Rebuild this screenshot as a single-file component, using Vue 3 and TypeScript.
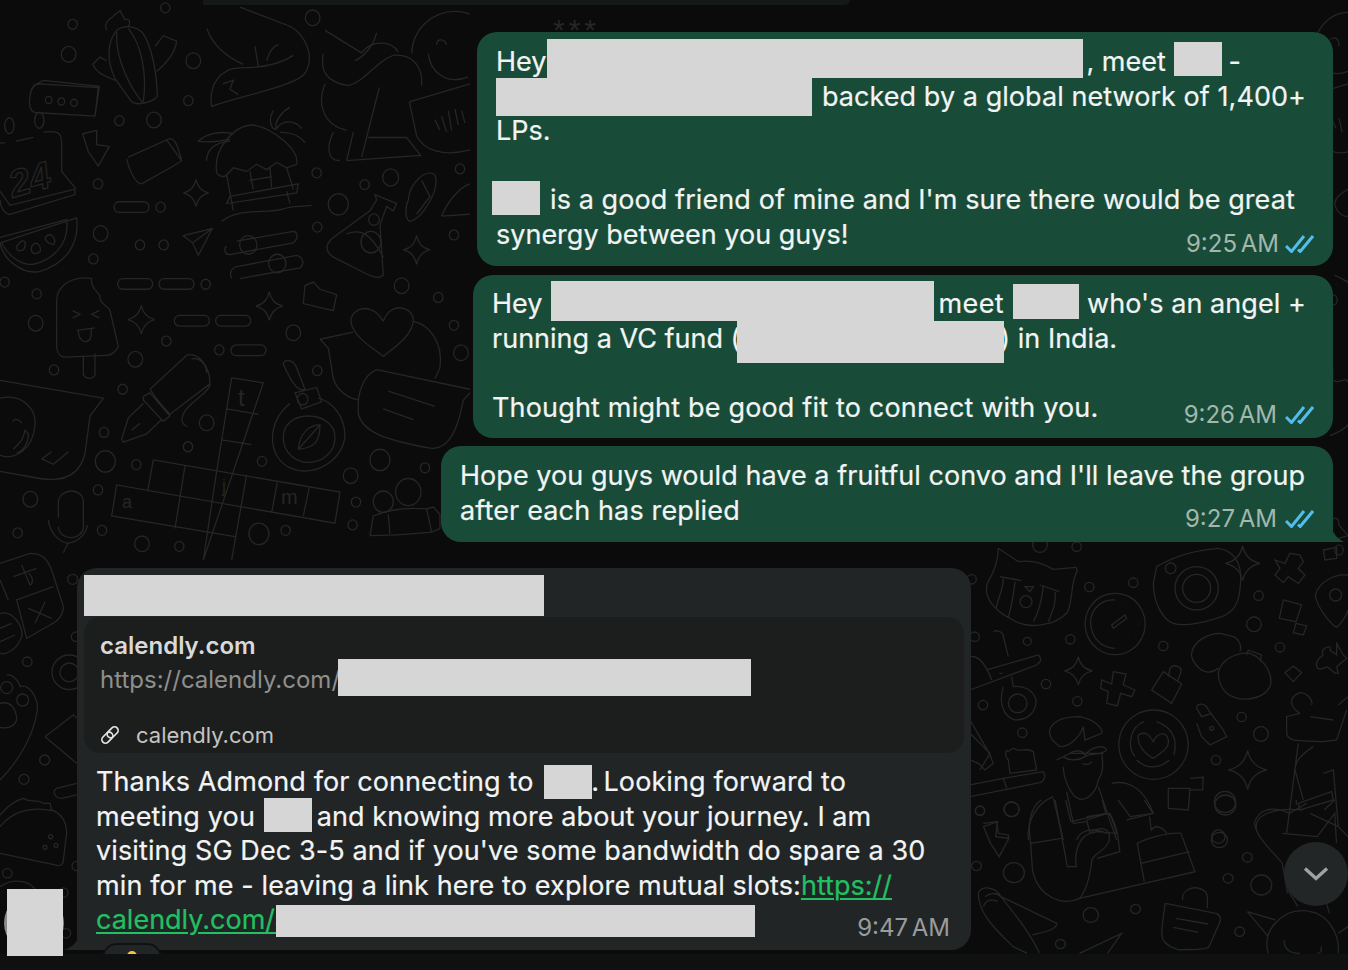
<script setup lang="ts">
type Seg = { t?: string; sp?: number; ws?: number; w?: number; dx?: number; top?: number; h?: number; rw?: number; cls?: string };
type Line = Seg[];
interface Msg { id: string; out: boolean; time: string; lines: Line[] }

const r = (w: number, dx: number, top: number, h: number, rw?: number): Seg => ({ w, dx, top, h, rw: rw ?? w });

const first: Msg = {
  id: 'b1', out: true, time: '9:25 AM',
  lines: [
    [{ t: 'Hey' }, r(540, 1, -32, 39, 536), { t: ', meet' }, r(55, 8, -29, 34, 48), { t: ' -' }],
    [r(326, 0, -28, 38, 316), { t: 'backed by a global network of 1,400+', sp: 0.055 }],
    [{ t: 'LPs.' }],
    [{ t: ' ' }],
    [r(54, -4, -28, 34, 48), { t: 'is a good friend of mine and I\'m sure there would be great', sp: 0.09 }],
    [{ t: 'synergy between you guys!' }],
  ],
};
const second: Msg = {
  id: 'b2', out: true, time: '9:26 AM',
  lines: [
    [{ t: 'Hey' }, r(396, 9, -32, 40, 383), { t: 'meet', sp: 0.4 }, r(83, 9, -29, 35, 66), { t: 'who\'s an angel +', sp: 0.06 }],
    [{ t: 'running a VC fund (' }, r(260, -3, -27, 42, 267), { t: ') in India.' }],
    [{ t: ' ' }],
    [{ t: 'Thought might be good fit to connect with you.', sp: 0.17 }],
  ],
};
const third: Msg = {
  id: 'b3', out: true, time: '9:27 AM',
  lines: [
    [{ t: 'Hope you guys would have a fruitful convo and I\'ll leave the group', sp: 0.045 }],
    [{ t: 'after each has replied', sp: 0.14 }],
  ],
};
const outgoing = [first, second, third];

const bodyLines: Line[] = [
  [{ t: 'Thanks Admond for connecting to ', sp: 0.1 }, r(50, 3, -26, 34, 48), { t: '. ', ws: -3 }, { t: 'Looking forward to', sp: 0.1 }],
  [{ t: 'meeting you ', sp: 0.15 }, r(54, 1, -28, 34, 48), { t: 'and knowing more about your journey. I am', sp: 0.07 }],
  [{ t: 'visiting SG Dec 3-5 and if you\'ve some bandwidth do spare a 30', sp: 0.11 }],
  [{ t: 'min for me - leaving a link here to explore mutual slots:', sp: 0.125 }, { t: 'https://', cls: 'link' }],
  [{ t: 'calendly.com/a', cls: 'link' }, r(479, -14, -24, 32)],
];

const rstyle = (s: Seg) => ({ width: `${s.w}px` });
const istyle = (s: Seg) => ({
  left: `${s.dx}px`, top: `${s.top}px`, height: `${s.h}px`, width: `${s.rw}px`,
});
const tstyle = (s: Seg) => ({
  letterSpacing: s.sp ? `${s.sp}px` : undefined,
  wordSpacing: s.ws ? `${s.ws}px` : undefined,
});

/* ---- wallpaper doodles ---- */
const star = (x: number, y: number, s: number) => {
  const k = s * 0.18;
  return `M${x} ${y - s}Q${x + k} ${y - k} ${x + s} ${y}Q${x + k} ${y + k} ${x} ${y + s}Q${x - k} ${y + k} ${x - s} ${y}Q${x - k} ${y - k} ${x} ${y - s}Z`;
};
const pill = (x: number, y: number, w: number, h: number) => {
  const q = h / 2;
  return `M${x + q} ${y}H${x + w - q}A${q} ${q} 0 0 1 ${x + w - q} ${y + h}H${x + q}A${q} ${q} 0 0 1 ${x + q} ${y}Z`;
};
type Group = { id: string; tf: string; c: number[][]; p: string[] };
const groups: Group[] = [
  {
    id: 'a', tf: 'scale(0.3333,0.3571)',
    c: [[206,152,22],[218,68,14],[496,22,14],[580,170,22],[565,282,14],[358,338,14],[462,336,22],[938,50,22],[294,515,14],[482,580,14],[1172,497,24],[1094,517,14],[1015,572,30],[950,484,14],[952,636,14],[1380,473,14],[1362,658,14],[302,654,22],[420,686,14],[491,686,14],[280,725,14],[14,790,14],[110,823,14],[617,796,14],[1205,800,22],[1315,833,14],[107,905,22],[499,955,14],[880,932,22],[658,980,14],[1362,911,14],[1383,988,22],[406,1006,22],[162,1036,14],[952,1038,14],[368,1090,14],[620,1184,22],[312,1211,14],[564,1251,14],[786,1292,14],[316,1292,30],[409,1301,14],[1140,1288,30],[1275,1310,14],[1052,1332,22],[294,1372,14],[91,1398,22],[1068,1406,14],[1058,1470,14],[306,1485,14],[777,1495,30],[857,1485,14],[53,1492,14],[426,1523,22],[538,1530,14],[146,280,10],[184,284,10],[222,288,10],[745,686,26],[832,738,26],[1122,615,16],[1113,678,30],[908,1118,16],[1225,1378,38],[1150,1405,30]],
    p: [
      pill(342,565,105,30), pill(353,780,105,30), pill(477,780,105,30), pill(523,883,105,30), pill(647,883,105,30), pill(693,966,105,30),
      star(588,540,38), star(1250,700,40), star(424,895,40), star(808,857,40),
      'M350 85C320 120 320 170 345 220L395 285C410 298 460 285 472 270C470 200 455 130 430 95C410 70 370 70 350 85M350 90C345 170 395 250 430 290M385 80C430 130 440 220 430 285',
      'M320 85C310 60 330 55 340 45L360 30L375 55C390 50 392 65 385 75M345 225C310 210 290 205 278 180L300 160L320 170M470 200C500 175 525 150 530 115L490 100L465 130',
      'M90 270C92 250 100 235 120 235L295 245L285 325L105 315C90 312 85 290 90 270M100 240L130 225L298 242L285 325',
      'M720 20L860 70C920 90 950 170 910 210C880 240 720 270 635 298C625 240 660 190 720 190C780 190 840 180 880 155M620 80C640 130 680 160 730 180M765 130L775 185M800 170C810 140 820 130 835 125M668 235L700 225L690 250L715 265',
      'M975 85L1085 148M1130 92C1120 130 1090 160 1065 170M1085 148C1110 115 1170 110 1195 145M970 150C960 200 980 230 1045 240C1100 225 1130 170 1180 155C1240 150 1270 190 1265 240M975 235C950 290 970 350 1040 365M1138 245L1085 440M1040 450L1262 435L1220 385L1105 385M1060 370L1040 450M1000 370C980 410 980 450 1020 450',
      'M1235 150C1240 70 1310 30 1370 32C1400 35 1410 40 1410 40M1285 150C1290 200 1340 240 1405 215M1310 125C1310 110 1330 105 1340 125',
      'M1228 285L1410 235M1228 285L1250 380C1270 420 1330 440 1410 420M1305 335L1320 365M1325 325L1340 370M1345 310L1355 365M1365 305L1375 350M1385 310L1395 345',
      'M0 400H15M48 395L100 385M130 370C170 365 185 370 185 400V480L225 525V545L30 600C15 600 0 580 0 560M0 535L30 575L222 530M20 370A14 22 0 1 1 21 371M110 355A14 22 0 1 1 111 356',
      'M385 440L500 392L545 450L520 465L425 515C405 515 385 470 380 445M500 392C520 380 530 395 545 450',
      'M248 375L290 365L290 405L328 410L295 465L265 425Z',
      'M650 480C640 420 700 350 760 350C820 360 900 420 890 460L860 470L830 455L800 475L770 460L740 480L700 470L680 490C670 500 650 490 650 480M680 490L700 590M750 480L760 530M810 470L815 525M748 505L815 495M690 550L895 515L890 540L680 570ZM860 470L880 530M860 535L870 570M665 620C720 580 800 600 850 585C880 575 900 580 935 575M820 310C800 340 820 370 830 360C820 340 850 310 870 300M830 360C850 330 890 340 905 360M840 370C870 370 900 380 915 400M700 375C660 365 620 375 595 395C620 400 660 395 690 390M620 450C620 420 640 400 690 395',
      'M0 680L230 610C240 690 190 740 120 760C70 770 10 730 0 680M0 665L200 615C210 690 150 730 100 740C60 745 20 710 5 680M50 690C70 660 85 680 70 700C50 705 50 700 50 690M95 690C110 670 125 690 120 705C105 715 90 710 95 690M140 660C160 650 170 675 160 685C140 680 130 670 140 660',
      'M1125 545L1190 570L1180 590L1160 578L1140 630L1150 770C1130 790 1100 765 1000 720C970 700 980 680 1000 665L1110 590L1130 560ZM1040 655C1080 640 1110 650 1150 720',
      'M1225 560C1230 510 1280 470 1305 490C1320 530 1270 610 1230 620C1215 615 1215 580 1225 560M1265 505L1290 550L1250 600',
      'M1325 605C1350 550 1390 520 1410 515M1325 605L1410 600',
      'M550 660L637 640L595 715L578 680ZM578 680L637 640',
      'M680 690C670 695 675 715 690 713L880 680C895 670 895 650 880 648L710 675M695 780C685 760 700 745 720 745L890 715C910 720 915 740 900 750L720 780',
      'M190 800C210 780 250 775 275 780C270 810 300 820 300 830C295 850 330 860 330 870L355 970C350 985 330 995 320 995L190 1000C175 995 170 980 170 970V840C170 820 180 810 190 800M250 1000V1050C260 1065 280 1060 285 1050V990M218 870L240 880L218 890M298 870L275 880L298 890M230 925L285 918M235 925C235 960 265 965 272 945L275 920',
      'M915 800L940 790L960 810L1010 825L1000 870L910 850Z',
      'M1150 900C1110 835 1040 870 1055 910C1070 950 1120 975 1150 998C1180 975 1240 940 1240 895C1235 855 1170 845 1150 900M960 950L1060 930M960 950L985 975L1000 1060C1010 1090 1040 1115 1075 1120M1240 900C1290 910 1330 960 1320 1030L1305 1060',
      'M1130 1035L1410 1090M1130 1035C1090 1050 1070 1100 1075 1160C1090 1210 1150 1230 1290 1255C1340 1260 1370 1220 1390 1120C1400 1110 1405 1105 1410 1100M1165 1095L1305 1138M1150 1145L1240 1175',
      'M450 1090L560 995C590 985 630 1020 630 1075L510 1160C490 1140 470 1120 450 1090M575 1005C600 1000 620 1020 620 1045M430 1110L450 1100L510 1165L490 1180L430 1120ZM430 1130L385 1170L365 1230L370 1238L440 1215L485 1175M420 1185L395 1205M630 1075C630 1100 560 1130 550 1160C540 1180 550 1190 562 1195',
      'M695 1058L790 1072L610 1568M695 1058L650 1320M680 1145L775 1160M665 1232L755 1245M460 1288L1020 1378L1005 1465L350 1358L335 1445L705 1503M460 1288L443 1375M555 1305L525 1480M832 1352L815 1435M928 1365L910 1445M650 1320L610 1568M740 1330L695 1568',
      'M850 1020C850 1005 880 1005 890 1030L915 1090C890 1100 870 1060 850 1020M870 1130C800 1180 800 1280 870 1310C940 1340 1030 1290 1035 1220C1035 1170 1000 1125 955 1115M885 1100L950 1085L965 1125L905 1145Z',
      'M925 1165C880 1165 850 1190 850 1225C850 1270 890 1295 925 1295C970 1295 1005 1265 1005 1225C1005 1190 970 1165 925 1165M895 1258C900 1210 930 1190 960 1190C960 1240 940 1255 895 1258M895 1258L960 1190',
      'M0 1065L310 1115L270 1165L255 1270C240 1330 190 1350 120 1340L0 1320M125 1285L160 1300L205 1265M155 1265L125 1285',
      'M0 1115C70 1100 110 1150 105 1190C100 1260 40 1290 0 1275M38 1180C45 1170 60 1175 65 1185M40 1258C70 1230 70 1225 75 1205L85 1215C85 1240 70 1265 50 1268',
      'M175 1450V1405C180 1365 250 1365 250 1405V1480C240 1515 180 1515 175 1475M145 1455C150 1500 190 1525 210 1520C240 1515 260 1490 262 1470M205 1520L190 1548',
      'M1110 1500L1120 1445C1170 1425 1220 1420 1280 1425L1295 1490C1240 1495 1170 1500 1110 1500M1165 1440L1170 1495M1280 1425L1300 1420L1320 1440V1480L1295 1490',
    ],
  },
  {
    id: 'b', tf: 'translate(970,540) scale(0.3333)',
    c: [[210,15,22],[320,20,14],[5,118,14],[358,141,14],[490,128,14],[602,85,16],[866,167,14],[852,253,22],[14,290,14],[172,304,12],[301,298,14],[580,318,14],[930,322,14],[228,432,14],[39,495,14],[322,484,14],[157,578,14],[815,531,14],[873,582,22],[738,660,14],[30,812,14],[125,808,22],[765,786,32],[745,890,20],[680,145,65],[680,145,42],[1097,165,18],[143,490,28],[168,185,18],[725,565,6]],
    p: [
      star(325,393,42), star(833,690,58), star(818,70,52),
      'M85 25L145 65C180 60 220 70 250 88L318 82L322 92C300 130 310 190 290 220C250 260 170 270 120 235C70 210 40 170 52 130C70 100 85 60 85 25M90 110L155 122M100 115C100 150 85 170 78 205M135 125C130 170 125 200 115 230M210 135L268 155M220 140C215 180 205 220 190 245M255 155C260 190 245 220 235 245M165 140H190L180 155Z',
      'M435 180C395 175 360 210 362 250C365 300 400 325 435 325M435 160A90 92 0 1 0 436 160M465 225L425 255L430 265L470 235ZM468 189h1M495 215h1M504 252h1M495 288h1M470 313h1',
      'M560 80C610 50 680 30 745 25C790 30 815 70 812 120C810 180 800 220 740 235C690 250 640 260 610 250C580 240 550 190 550 130Z',
      'M915 60L945 70L960 40L990 45L1000 65L985 85L1005 105L985 130L955 110L940 128L915 105L930 85Z',
      'M1060 30L1100 22L1100 55L1065 60Z',
      'M940 180L995 195L978 245L928 235ZM978 250L1010 258L1000 285L970 278Z',
      'M1134 105C1090 100 1045 130 1036 165C1040 200 1080 250 1100 262C1110 255 1134 220 1134 210',
      'M1060 345C1045 325 1090 310 1080 330L1100 345L1100 310L1120 345L1130 355L1100 380L1105 400C1085 405 1080 370 1060 385C1035 395 1030 365 1060 345',
      'M970 378L995 398L970 425L945 398Z',
      'M0 350C30 345 50 380 65 420M50 390L205 345C215 355 215 365 200 375L0 450M70 275C70 270 100 270 100 290L115 350M125 410L130 440M100 440C85 490 100 530 135 540C180 540 200 510 198 480C190 450 160 435 130 440M88 400h10',
      'M0 540L55 635L70 670L45 690L25 670L0 660',
      'M430 395L468 402L460 435L495 450L485 470L452 460L442 498L410 490L415 455L392 445L395 420L425 432Z',
      'M580 395L635 432L605 490L545 450ZM595 410L600 385C610 370 640 380 632 400L622 425',
      'M745 385C700 420 660 360 665 340C670 300 720 280 750 280L790 290C810 300 815 320 810 335M745 400C750 360 800 335 840 340C890 360 910 410 900 440C880 480 810 490 770 460C750 440 745 420 745 400M830 345L835 330L875 345L870 365',
      'M550 510A104 104 0 1 0 551 510M522 545C480 560 470 620 495 650M560 545C600 560 625 590 612 645M500 660C530 690 570 685 598 660M550 655C520 640 500 610 505 585C530 570 540 590 550 605C560 580 590 570 595 600C600 625 570 640 550 655',
      'M725 520L695 530L680 505C680 485 710 490 715 510L760 570L770 590L720 615L695 590L680 550',
      'M990 520C955 500 960 470 985 460C1005 450 1030 480 1025 495M990 520L950 530V580C955 610 1000 600 1060 605L1100 600L1130 510M1020 530L1090 540M1134 470L1105 495M985 610L950 880M1030 620C1000 640 975 660 975 690L1000 780M985 790L1085 755L1090 780L990 810ZM1060 700L1090 690L1105 860M1000 810C900 800 850 830 860 870M1020 820L1105 860L1134 890',
      'M270 620C210 580 240 530 330 530C380 540 400 570 395 580L345 600L340 560C330 590 300 620 270 620M300 640H400M260 660L300 640C310 630 340 630 345 645C360 625 400 610 410 630C400 645 360 640 345 650C330 660 300 665 280 650M280 680C280 710 300 770 330 778C360 780 380 750 385 720C400 700 400 670 395 640M338 670C345 675 360 675 365 665',
      'M290 755L310 850L350 845M385 740L440 900M425 730C470 720 520 740 550 820L470 840M250 770C200 790 170 840 175 900M250 775L280 900M350 830L420 820L440 880L380 875L365 880M320 900C330 870 370 860 410 880',
      'M595 745L660 745L655 810L595 805ZM660 715L700 712L698 750L660 750',
      'M0 735L100 715L220 695C230 710 220 725 210 728L0 770M100 715L110 745M110 630C115 640 125 625 130 625C150 640 170 620 190 635L200 690L120 700L115 660C105 650 105 640 110 630',
      'M40 850L80 845L85 880L115 885V900',
      'M0 580L60 640L30 690',
    ],
  },
  {
    id: 'c', tf: 'translate(800,800) scale(0.3495,0.3333)',
    c: [[515,32,13],[605,28,22],[505,198,14],[612,218,30],[1200,120,23],[1280,172,14],[1225,235,14],[1320,255,30],[832,345,22],[960,327,14],[745,432,14],[1258,395,14],[1217,15,30]],
    p: [
      'M525 80L565 65L560 110L598 115L570 170L545 130Z',
      'M690 0C660 20 650 70 660 130L665 210C680 290 750 320 800 295L1130 215L1090 100C1050 95 985 120 965 130L985 245M660 130L750 115L730 0M975 190L1115 155',
      'M820 60L880 40C900 50 910 100 915 155L850 175M820 60L830 100C800 110 785 150 790 200L765 200L750 115M830 100C860 75 890 85 885 120C880 150 840 160 835 180C830 230 820 270 800 295M760 0L775 65L875 40L865 0',
      'M910 0L945 50L1010 40L985 0M1000 50L1005 90C1020 70 1040 85 1050 100',
      'M510 280C520 255 560 260 575 290L735 370C735 390 700 395 665 405M510 280C510 340 560 390 610 440L650 460M575 290C620 350 660 400 685 460M530 290C540 280 560 275 575 290M525 320C530 300 550 295 565 305',
      'M1045 310L1190 340C1205 345 1205 360 1200 370L1170 440C1160 455 1090 445 1085 450L1060 440C1030 420 1030 410 1045 310M1075 355L1168 372M1068 382L1140 397M1095 300C1090 270 1130 250 1160 275C1170 290 1165 310 1165 325',
      'M1340 460C1320 390 1380 330 1440 332C1510 335 1545 400 1540 460M1385 420C1385 445 1400 460 1430 460M1490 440C1495 450 1490 460 1480 460M1280 335L1360 360M1280 335L1340 410M1395 270L1425 320M1500 290L1515 340M1540 400L1568 380',
      'M800 460L920 400L880 460',
      'M1300 70C1310 30 1350 15 1400 40L1450 10M1300 70C1310 120 1350 150 1380 190L1395 280M1380 100L1480 110L1530 40L1535 130M1420 15V0M1500 30L1530 0',
    ],
  },
  {
    id: 'd', tf: 'translate(0,540) scale(0.3333)',
    c: [[218,118,15],[228,290,14],[82,365,14],[208,397,28],[208,397,52],[20,443,18],[68,480,18],[134,660,15],[72,718,15],[152,890,6],[135,922,6],[168,916,6],[22,1000,14],[190,1058,14],[198,1180,14],[230,978,14]],
    p: [
      'M0 70L90 40C120 40 140 50 155 90L190 200C190 220 180 240 150 255L80 295L50 180L160 140M0 120L25 180M85 100C100 110 100 130 90 135M40 110L110 85M65 75L90 135M85 205L155 235M135 185L105 250',
      'M0 220C40 210 70 260 65 290C50 335 10 345 0 340M0 265L35 250M0 305L45 285',
      'M0 490C40 480 50 520 50 540C40 565 15 565 0 562M20 405C40 400 60 430 60 440C85 430 115 470 112 510C100 600 40 680 0 720',
      'M135 590L220 525L240 540M135 590L230 670',
      'M230 730L170 745C155 755 165 775 185 775L230 765',
      'M0 825C30 790 50 780 70 775C90 790 110 775 130 790L150 790L155 810C180 820 200 840 200 880L190 960C190 975 180 980 165 975L0 940M0 860C40 810 100 800 155 812',
      'M0 1040C30 1020 60 1020 85 1030C100 1040 110 1050 110 1060',
    ],
  },
  {
    id: 'e', tf: 'translate(1300,0) scale(0.3,0.3571)',
    c: [[110,840,14],[130,1540,14]],
    p: [
      'M50 110C70 60 120 30 170 35M100 110C120 100 130 110 130 130M70 190C100 210 130 210 160 200M100 250L160 235M110 340L120 360M130 330L140 370M100 420C120 430 140 430 160 425',
      'M115 570C120 550 140 540 160 530M115 570C120 590 140 610 160 605M115 770L160 790M100 1050C120 1090 150 1050 160 1070M100 1000C110 1020 115 1060 100 1080M100 1220C130 1210 150 1200 160 1190M100 1470C110 1440 130 1450 130 1470L160 1500L120 1510',
    ],
  },
];
const wallText = [
  { id: 't1', x: 238, y: 406, s: 24, t: 't', tf: '', cls: '' },
  { id: 't2', x: 122, y: 508, s: 18, t: 'a', tf: '', cls: '' },
  { id: 't3', x: 222, y: 492, s: 18, t: 'j', tf: '', cls: '' },
  { id: 't4', x: 281, y: 504, s: 20, t: 'm', tf: '', cls: '' },
  { id: 't5', x: 6, y: 192, s: 38, t: '24', tf: 'rotate(-16 30 170)', cls: 'outline' },
  { id: 't6', x: 553, y: 40, s: 30, t: '***', tf: '', cls: 'stars' },
];
</script>

<template>
  <div class="app">
    <main class="chat">
      <svg class="wall" width="1348" height="954" aria-hidden="true">
        <g v-for="g in groups" :key="g.id" :transform="g.tf">
          <circle v-for="(c, i) in g.c" :key="i" :cx="c[0]" :cy="c[1]" :r="c[2]" />
          <path v-for="(d, i) in g.p" :key="i" :d="d" />
        </g>
        <text v-for="w in wallText" :key="w.id" :x="w.x" :y="w.y" :font-size="w.s" :transform="w.tf || undefined" :class="w.cls">{{ w.t }}</text>
      </svg>

      <div class="top-edge"></div>

      <section class="thread">
        <article v-for="m in outgoing" :key="m.id" class="bubble out" :class="m.id">
          <div v-for="(ln, i) in m.lines" :key="i" class="line">
            <template v-for="(s, j) in ln" :key="j">
              <span v-if="s.t" :class="s.cls" :style="tstyle(s)">{{ s.t }}</span>
              <span v-else class="gap" :style="rstyle(s)"><i :style="istyle(s)"></i></span>
            </template>
          </div>
          <div class="meta">
            <span class="time">{{ m.time }}</span>
            <svg class="ticks" width="29" height="18" viewBox="0 0 29 18">
              <path d="M1 11l5.5 5.5L19 1M13 14.5l2.2 2L28 1" />
            </svg>
          </div>
          <svg v-if="m.id === 'b3'" class="tail-out" width="14" height="16" viewBox="0 0 14 16">
            <path d="M0 0V16H13C7 13 2 8 0 0Z" />
          </svg>
        </article>

        <article class="bubble in">
          <div class="sender"><i></i></div>
          <div class="preview">
            <div class="p-title">calendly.com</div>
            <div class="p-url">https://calendly.com/a<i></i></div>
            <div class="p-site">
              <svg width="20" height="20" viewBox="0 0 20 20">
                <g transform="translate(10 10) rotate(-45)">
                  <rect x="-10" y="-3.6" width="12.5" height="7.2" rx="3.6" />
                  <rect x="-2.5" y="-3.6" width="12.5" height="7.2" rx="3.6" />
                </g>
              </svg>
              <span>calendly.com</span>
            </div>
          </div>
          <div class="body">
            <div v-for="(ln, i) in bodyLines" :key="i" class="line">
              <template v-for="(s, j) in ln" :key="j">
                <span v-if="s.t" :class="s.cls" :style="tstyle(s)">{{ s.t }}</span>
                <span v-else class="gap" :style="rstyle(s)"><i :style="istyle(s)"></i></span>
              </template>
            </div>
          </div>
          <div class="meta in-meta"><span class="time">9:47 AM</span></div>
          <svg class="tail-in" width="16" height="14" viewBox="0 0 16 14">
            <path d="M16 0V14H0C8 12 13 8 16 0Z" />
          </svg>
          <div class="reaction"><b></b></div>
        </article>
      </section>

      <button class="down" type="button" aria-label="Scroll to bottom">
        <svg width="26" height="16" viewBox="0 0 26 16"><path d="M2 2.5l11 10 11-10" /></svg>
      </button>
    </main>
    <footer class="strip"></footer>
    <div class="avatar"><i></i></div>
  </div>
</template>

<style scoped>
.app {
  position: relative;
  width: 1348px;
  height: 970px;
  display: flex;
  flex-direction: column;
  background: #0b0b0b;
  overflow: hidden;
  font-family: Inter, "Noto Sans", sans-serif;
  color: #f2f4f4;
}
.chat {
  position: relative;
  flex: none;
  height: 954px;
  overflow: hidden;
  background: #0b0b0b;
}
.wall {
  position: absolute;
  inset: 0;
}
.wall circle,
.wall path {
  fill: none;
  stroke: #252626;
  stroke-width: 1.3;
  vector-effect: non-scaling-stroke;
}
.wall text {
  fill: #252626;
  font-family: "Liberation Sans", sans-serif;
}
.wall text.outline {
  fill: none;
  stroke: #252626;
  stroke-width: 1.2;
  font-style: italic;
  font-weight: 700;
}
.wall text.stars {
  letter-spacing: 4px;
}
.top-edge {
  position: relative;
  width: 647px;
  height: 5px;
  margin-left: 203px;
  background: #151818;
  border-bottom-right-radius: 5px;
}
.thread {
  position: relative;
  display: flex;
  flex-direction: column;
  align-items: flex-end;
  padding: 27px 15px 0 0;
}
.bubble {
  position: relative;
  border-radius: 20px;
  font-size: 27px;
  white-space: pre;
  -webkit-text-stroke: 0.2px currentColor;
}
.line {
  height: 34.5px;
  line-height: 34.5px;
}
.out {
  background: #184c38;
  box-sizing: border-box;
}
.b1 {
  width: 856px;
  height: 234px;
  margin-bottom: 9px;
  padding: 13px 0 0 19px;
}
.b2 {
  width: 860px;
  height: 163px;
  margin-bottom: 8px;
  padding: 12px 0 0 19px;
}
.b3 {
  width: 892px;
  height: 96px;
  margin-bottom: 26px;
  padding: 13px 0 0 19px;
  border-bottom-right-radius: 0;
}
.gap {
  position: relative;
  display: inline-block;
  height: 0;
}
.gap i,
.sender i,
.p-url i,
.avatar i {
  display: block;
  position: absolute;
  background: #d6d6d6;
}
.meta {
  position: absolute;
  right: 19px;
  bottom: 10px;
  display: flex;
  align-items: center;
  gap: 7px;
  -webkit-text-stroke: 0;
}
.b1 .meta {
  bottom: 9px;
  gap: 6px;
}
.b2 .time,
.b3 .time {
  margin-right: 1px;
}
.time {
  font-size: 24px;
  line-height: 26px;
  color: #a2b7ad;
  word-spacing: -3px;
}
.ticks path {
  fill: none;
  stroke: #53bdeb;
  stroke-width: 3;
}
.tail-out {
  position: absolute;
  right: -12px;
  bottom: 0;
  color: #184c38;
}
.tail-out path,
.tail-in path {
  fill: currentColor;
}
.in {
  align-self: flex-start;
  width: 894px;
  height: 382px;
  margin-left: 77px;
  box-sizing: border-box;
  padding: 0 7px;
  background: #212526;
  border-bottom-left-radius: 0;
}
.tail-in {
  position: absolute;
  left: -14px;
  bottom: 0;
  color: #212526;
}
.sender {
  height: 49px;
}
.sender i {
  left: 7px;
  top: 7px;
  width: 460px;
  height: 41px;
}
.preview {
  height: 136px;
  box-sizing: border-box;
  padding: 12px 16px 0;
  background: #1c1e1e;
  border-radius: 16px;
  -webkit-text-stroke: 0;
}
.p-title {
  font-size: 24px;
  line-height: 34px;
  font-weight: 600;
  color: #d9d9d9;
}
.p-url {
  position: relative;
  font-size: 24px;
  line-height: 34px;
  color: #8f8f8f;
}
.p-url i {
  left: 238px;
  top: -4px;
  width: 413px;
  height: 37px;
}
.p-site {
  display: flex;
  align-items: center;
  gap: 16px;
  margin-top: 23px;
  font-size: 22px;
  line-height: 30px;
  color: #c4c4c4;
}
.p-site svg {
  flex: none;
}
.p-site rect {
  fill: none;
  stroke: #e4e4e4;
  stroke-width: 1.7;
}
.body {
  padding: 12px 0 0 12px;
}
.link {
  color: #21c063;
  text-decoration: underline;
  text-decoration-thickness: 2px;
  text-underline-offset: 3px;
}
.in-meta {
  right: 21px;
  bottom: 9px;
}
.in-meta .time {
  color: #9a9c9c;
}
.reaction {
  position: absolute;
  left: 25px;
  top: 375px;
  width: 60px;
  height: 30px;
  box-sizing: border-box;
  border: 2px solid #101212;
  border-radius: 20px;
  background: #212526;
}
.reaction b {
  display: block;
  width: 10px;
  height: 10px;
  margin: 6px auto 0;
  border-radius: 50%;
  background: #f5c33b;
}
.avatar {
  position: absolute;
  left: 4px;
  top: 893px;
  width: 60px;
  height: 60px;
  border-radius: 50%;
  background: #8a8a8a;
}
.avatar i {
  left: 3px;
  top: -4px;
  width: 56px;
  height: 67px;
}
.down {
  position: absolute;
  left: 1284px;
  top: 842px;
  width: 64px;
  height: 64px;
  padding: 0;
  border: 0;
  border-radius: 50%;
  background: #232627;
  display: flex;
  align-items: center;
  justify-content: center;
}
.down path {
  fill: none;
  stroke: #a0a2a2;
  stroke-width: 3.4;
}
.strip {
  flex: none;
  height: 16px;
  background: #0f1010;
}
</style>

<style>
body { margin: 0; background: #0b0b0b; }
</style>
